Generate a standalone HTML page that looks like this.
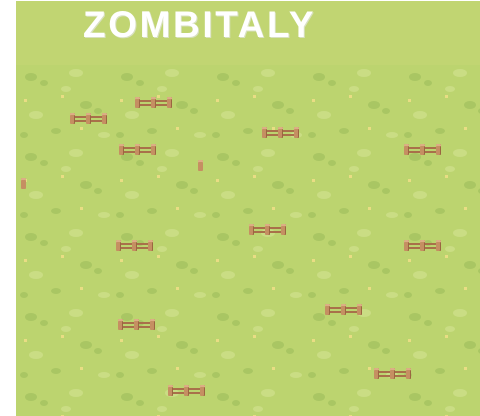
<!DOCTYPE html><html><head><style>
html,body{margin:0;width:480px;height:416px;background:#fff;position:relative;overflow:hidden;font-family:"Liberation Sans",sans-serif}
#g{position:absolute;left:16px;top:1px;width:464px;height:415px;background:#bcd46f;overflow:hidden}
#h{position:absolute;left:16px;top:1px;width:464px;height:64px;background:#c1d572}
#t{position:absolute;left:83px;top:4px;font-size:37px;font-weight:bold;color:#fff;letter-spacing:2.6px;text-shadow:1px 1px 0 #d8e0c0}
.f{position:absolute;width:37px;height:11px}
.f i{position:absolute;top:0;width:5px;height:11px;background:#c58f62;border-radius:1px;box-shadow:inset 0 2px 0 #dcae85,inset -1px 0 0 #9a6640}
.f b{position:absolute;left:2px;right:2px;height:2px;background:#a8704a}
.p{position:absolute;width:5px;height:11px;background:#c58f62;border-radius:1px;box-shadow:inset 0 2px 0 #dcae85}
</style></head><body>
<div id="g"><svg width="464" height="351" style="position:absolute;left:0;top:64px;display:block">
<defs><pattern id="pt" width="96" height="80" patternUnits="userSpaceOnUse">
<ellipse cx="15" cy="12" rx="6" ry="4" fill="#a9c663"/><ellipse cx="28" cy="18" rx="4" ry="3" fill="#a9c663"/>
<ellipse cx="60" cy="8" rx="7" ry="4" fill="#cadd84"/><ellipse cx="70" cy="40" rx="6" ry="4" fill="#a9c663"/>
<ellipse cx="82" cy="46" rx="4" ry="3" fill="#a9c663"/><ellipse cx="20" cy="50" rx="7" ry="4" fill="#cadd84"/>
<ellipse cx="40" cy="66" rx="5" ry="3" fill="#a9c663"/><ellipse cx="88" cy="70" rx="6" ry="3" fill="#cadd84"/>
<ellipse cx="50" cy="24" rx="5" ry="3" fill="#cadd84"/><ellipse cx="8" cy="70" rx="4" ry="3" fill="#a9c663"/>
<rect x="45" y="30" width="3" height="3" fill="#e9dd84"/><rect x="8" y="34" width="3" height="3" fill="#e9dd84"/><rect x="64" y="62" width="3" height="3" fill="#e9dd84"/>
</pattern></defs><rect width="464" height="351" fill="url(#pt)"/></svg></div>
<div id="h"></div>
<div id="t">ZOMBITALY</div>
<script>
var F=[[70,113],[135,97],[262,127],[119,144],[404,144],[249,224],[116,240],[404,240],[325,304],[118,319],[374,368],[168,385]];
F.forEach(function(a){document.write('<div class="f" style="left:'+a[0]+'px;top:'+a[1]+'px"><b style="top:3px"></b><b style="top:7px"></b><i style="left:0"></i><i style="left:16px"></i><i style="left:32px"></i></div>')});
</script>
<div class="p" style="left:198px;top:160px"></div>
<div class="p" style="left:21px;top:178px"></div>
</body></html>
